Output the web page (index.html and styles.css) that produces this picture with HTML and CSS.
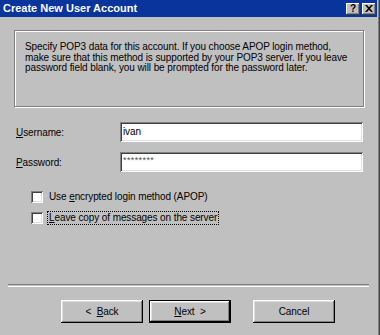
FILE: index.html
```html
<!DOCTYPE html>
<html lang="en">
<head>
    <meta charset="UTF-8">
    <title>Create New User Account</title>
    <link rel="stylesheet" href="styles.css">
</head>
<body>
    <div class="window">
        <div class="titlebar">
            <span class="title">Create New User Account</span>
            <div class="title-buttons">
                <span class="tbtn help">?</span>
                <span class="tbtn">
                    <svg width="8" height="7" viewBox="0 0 8 7">
                        <path d="M0 0h2l2 2.2L6 0h2L5 3.5 8 7H6L4 4.8 2 7H0l3-3.5z" fill="#000"/>
                    </svg>
                </span>
            </div>
        </div>

        <div class="dialog">
            <div class="info">
                Specify POP3 data for this account. If you choose APOP login method,<br>
                make sure that this method is supported by your POP3 server. If you leave<br>
                password field blank, you will be prompted for the password later.
            </div>

            <div class="fields">
                <label class="field-label"><u>U</u>sername:</label>
                <div class="input">ivan</div>
                <label class="field-label"><u>P</u>assword:</label>
                <div class="input password">********</div>
            </div>

            <div class="checks">
                <div class="check">
                    <span class="box"></span>
                    <span class="check-label">Use <u>e</u>ncrypted login method (APOP)</span>
                </div>
                <div class="check">
                    <span class="box"></span>
                    <span class="check-label focused"><u>L</u>eave copy of messages on the server</span>
                </div>
            </div>

            <div class="separator"></div>

            <div class="buttons">
                <button class="btn">&lt;&nbsp;&nbsp;<u>B</u>ack</button>
                <button class="btn default"><u>N</u>ext&nbsp;&nbsp;&gt;</button>
                <button class="btn cancel">Cancel</button>
            </div>
        </div>
    </div>
</body>
</html>
```

FILE: styles.css
```css
html, body {
    margin: 0;
    padding: 0;
}

body {
    width: 380px;
    height: 335px;
    overflow: hidden;
    background: #c0c0c0;
    font-family: 'Liberation Sans', Arial, sans-serif;
    font-size: 10px;
    letter-spacing: -0.1px;
    color: #000;
}

.window {
    height: 335px;
    padding-right: 2px;
    border-right: 1px solid #404040;
    box-shadow: inset -1px 0 0 #808080;
}

.titlebar {
    height: 17px;
    width: 377px;
    background: #08349c;
    display: flex;
    align-items: center;
    justify-content: space-between;
    padding-left: 3px;
    box-sizing: border-box;
}

.title {
    color: #fff;
    font-weight: bold;
    font-size: 11px;
    letter-spacing: 0;
    line-height: 17px;
}

.title-buttons {
    display: flex;
    gap: 2px;
    padding-right: 1px;
}

.tbtn {
    width: 14px;
    height: 12px;
    background: #c0c0c0;
    box-shadow: inset -1px -1px 0 #404040, inset 1px 1px 0 #fff, inset -2px -2px 0 #808080;
    display: flex;
    align-items: center;
    justify-content: center;
    font-weight: bold;
    font-size: 10px;
    line-height: 12px;
}

.dialog {
    display: flex;
    flex-direction: column;
}

/* etched group frame */
.info {
    margin: 13px 0 0 14px;
    width: 350px;
    height: 77px;
    box-sizing: border-box;
    border: 1px solid #808080;
    box-shadow: 1px 1px 0 #fff, inset 1px 1px 0 #fff;
    padding: 11px 0 0 10px;
    line-height: 10.5px;
    white-space: nowrap;
}

.fields {
    margin: 15px 0 0 16px;
    display: grid;
    grid-template-columns: 104px 243px;
    row-gap: 10px;
    align-items: center;
}

.input {
    height: 20px;
    box-sizing: border-box;
    background: #fff;
    box-shadow: inset 1px 1px 0 #808080, inset -1px -1px 0 #fff, inset 2px 2px 0 #404040, inset -2px -2px 0 #dfdfdf;
    padding: 0 0 0 3px;
    line-height: 20px;
}

.password {
    font-size: 9px;
    letter-spacing: 0.4px;
    line-height: 17px;
    color: #505050;
}

.checks {
    margin: 19px 0 0 31px;
    display: flex;
    flex-direction: column;
}

.check {
    height: 21px;
    display: flex;
    align-items: flex-start;
    gap: 5px;
}

.box {
    width: 12px;
    height: 12px;
    background: #fff;
    box-shadow: inset 1px 1px 0 #808080, inset -1px -1px 0 #fff, inset 2px 2px 0 #404040, inset -2px -2px 0 #dfdfdf;
}

.check-label {
    line-height: 12px;
    padding: 0 1px;
}

.focused {
    outline: 1px dotted #000;
}

.separator {
    margin: 51px 0 0 8px;
    width: 361px;
    height: 1px;
    border-top: 1px solid #808080;
    border-bottom: 1px solid #fff;
}

.buttons {
    margin: 13px 0 0 61px;
    display: flex;
}

.btn {
    width: 82px;
    height: 23px;
    padding: 0;
    border: none;
    background: #c0c0c0;
    font-family: inherit;
    font-size: 10px;
    letter-spacing: inherit;
    color: #000;
    box-shadow: inset -1px -1px 0 #000, inset 1px 1px 0 #fff, inset -2px -2px 0 #808080, inset 2px 2px 0 #dfdfdf;
}

.btn.default {
    margin-left: 6px;
    border: 1px solid #000;
}

.btn.cancel {
    margin-left: 22px;
}
```
